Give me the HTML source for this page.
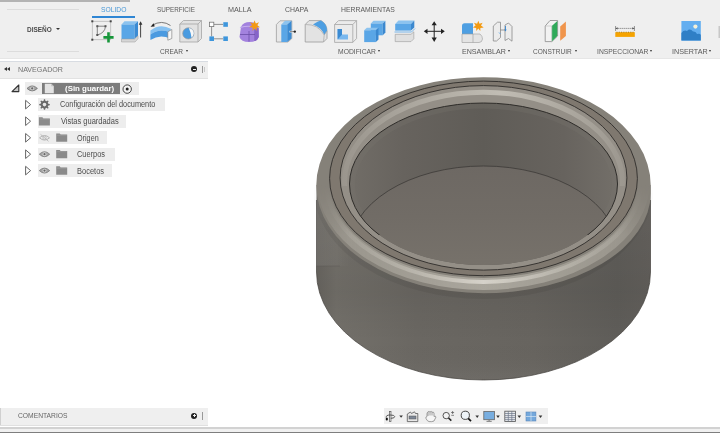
<!DOCTYPE html>
<html><head><meta charset="utf-8"><style>
html,body{margin:0;padding:0;}
body{width:720px;height:433px;position:relative;overflow:hidden;background:#fff;font-family:"Liberation Sans",sans-serif;}
.t{position:absolute;white-space:nowrap;transform-origin:0 0;}
svg{position:absolute;left:0;top:0;}
</style></head><body>
<div style="position:absolute;left:0;top:0;width:720px;height:58.5px;background:#efefef"></div><div style="position:absolute;left:0;top:0;width:130px;height:1.8px;background:#b3b3b3"></div><div style="position:absolute;left:0;top:58px;width:720px;height:1px;background:#e6e6e6"></div><div style="position:absolute;left:7px;top:9px;width:72px;height:41px;border-top:1px solid #dcdcdc;border-bottom:1px solid #dcdcdc"></div><span class="t" style="left:26.70px;top:25.55px;font-size:7.849px;line-height:7.849px;color:#4a4a4a;font-weight:bold;transform:scaleX(0.8241);">DISEÑO</span><div style="position:absolute;left:56px;top:28px;width:0;height:0;border-left:2px solid transparent;border-right:2px solid transparent;border-top:2.5px solid #333"></div><span class="t" style="left:100.50px;top:5.85px;font-size:7.849px;line-height:7.849px;color:#4a98d6;transform:scaleX(0.8597);">SOLIDO</span><div style="position:absolute;left:92px;top:16px;width:43px;height:2px;background:#2f86d4"></div><span class="t" style="left:157.00px;top:5.85px;font-size:7.849px;line-height:7.849px;color:#5a5a5a;transform:scaleX(0.8068);">SUPERFICIE</span><span class="t" style="left:228.00px;top:5.85px;font-size:7.849px;line-height:7.849px;color:#5a5a5a;transform:scaleX(0.9209);">MALLA</span><span class="t" style="left:284.70px;top:5.85px;font-size:7.849px;line-height:7.849px;color:#5a5a5a;transform:scaleX(0.8806);">CHAPA</span><span class="t" style="left:341.00px;top:5.85px;font-size:7.849px;line-height:7.849px;color:#5a5a5a;transform:scaleX(0.8741);">HERRAMIENTAS</span><span class="t" style="left:160.00px;top:47.68px;font-size:7.703px;line-height:7.703px;color:#5a5a5a;transform:scaleX(0.8528);">CREAR</span><div style="position:absolute;left:186.1px;top:49.8px;width:0;height:0;border-left:1.6px solid transparent;border-right:1.6px solid transparent;border-top:2.6px solid #333"></div><span class="t" style="left:338.00px;top:47.68px;font-size:7.703px;line-height:7.703px;color:#5a5a5a;transform:scaleX(0.8791);">MODIFICAR</span><div style="position:absolute;left:378.1px;top:49.8px;width:0;height:0;border-left:1.6px solid transparent;border-right:1.6px solid transparent;border-top:2.6px solid #333"></div><span class="t" style="left:461.70px;top:47.68px;font-size:7.703px;line-height:7.703px;color:#5a5a5a;transform:scaleX(0.9238);">ENSAMBLAR</span><div style="position:absolute;left:508.1px;top:49.8px;width:0;height:0;border-left:1.6px solid transparent;border-right:1.6px solid transparent;border-top:2.6px solid #333"></div><span class="t" style="left:532.60px;top:47.68px;font-size:7.703px;line-height:7.703px;color:#5a5a5a;transform:scaleX(0.8495);">CONSTRUIR</span><div style="position:absolute;left:574.8000000000001px;top:49.8px;width:0;height:0;border-left:1.6px solid transparent;border-right:1.6px solid transparent;border-top:2.6px solid #333"></div><span class="t" style="left:597.00px;top:47.68px;font-size:7.703px;line-height:7.703px;color:#5a5a5a;transform:scaleX(0.8783);">INSPECCIONAR</span><div style="position:absolute;left:650.1px;top:49.8px;width:0;height:0;border-left:1.6px solid transparent;border-right:1.6px solid transparent;border-top:2.6px solid #333"></div><span class="t" style="left:671.80px;top:47.68px;font-size:7.703px;line-height:7.703px;color:#5a5a5a;transform:scaleX(0.9336);">INSERTAR</span><div style="position:absolute;left:709.1px;top:49.8px;width:0;height:0;border-left:1.6px solid transparent;border-right:1.6px solid transparent;border-top:2.6px solid #333"></div><svg width="720" height="60" viewBox="0 0 720 60"><g><rect x="92.3" y="21.3" width="18.4" height="18.4" fill="none" stroke="#b9b9b9" stroke-width="0.8"/><rect x="91.3" y="20.3" width="2" height="2" fill="#444"/><rect x="109.7" y="20.3" width="2" height="2" fill="#444"/><rect x="91.3" y="38.7" width="2" height="2" fill="#444"/><path d="M97.3,26.2 H105.5 M97.3,26.2 V35 M105.5,26.2 Q105,33 97.3,35" fill="none" stroke="#555" stroke-width="0.7"/><rect x="96.3" y="25.2" width="2" height="2" fill="#555"/><rect x="104.5" y="25.2" width="2" height="2" fill="#555"/><rect x="96.3" y="34" width="2" height="2" fill="#555"/><path d="M107.2,32.3 h2.6 v3.8 h3.8 v2.6 h-3.8 v3.8 h-2.6 v-3.8 h-3.8 v-2.6 h3.8 z" fill="#17963a"/></g><path d="M121.5,24.5 L124.5,21.3 L138,21.3 L134.5,24.5 Z" fill="#8cc3ef"/><rect x="121.5" y="24.5" width="13" height="14.5" fill="#5aa6e6"/><path d="M134.5,24.5 L138,21.3 L138,35.8 L134.5,39 Z" fill="#3b8bd3"/><path d="M121.5,39 L134.5,39 L138,35.8 L138,38.8 L135,42 L121.5,42 Z" fill="#d6d6d6" stroke="#9a9a9a" stroke-width="0.5"/><path d="M140.6,23.5 V37.5" stroke="#333" stroke-width="0.9"/><path d="M138.8,24.8 L140.6,21.3 L142.4,24.8 Z" fill="#333"/><path d="M152,25.3 Q162,19.5 170.5,25.5" fill="none" stroke="#6a6a6a" stroke-width="0.9"/><path d="M150.5,26.8 L153.8,23.2 L154.6,26.6 Z" fill="#222"/><path d="M150.4,30.5 Q160,23 170.8,28.8 L170.5,32.5 Q160,27.5 150.4,34.5 Z" fill="#86c1f1"/><path d="M150.4,34.5 Q160,27.5 170.5,32.5 L170.5,38.8 Q160,33.5 150.4,40 Z" fill="#4a9ae0"/><path d="M167.8,31.8 L171.8,29.5 L171.8,38.5 L167.8,40.2 Z" fill="#f6f6f6" stroke="#777" stroke-width="0.6"/><path d="M179.8,24 L183.5,20.5 L201.5,20.5 L201.5,38.5 L198,42 L179.8,42 Z" fill="#e2e2e2" stroke="#a5a5a5" stroke-width="0.8"/><path d="M179.8,24 L198,24 L201.5,20.5 M198,24 L198,42" fill="none" stroke="#a5a5a5" stroke-width="0.8"/><circle cx="188.3" cy="33.4" r="5.6" fill="#4a9be0" stroke="#9a9a9a" stroke-width="0.7"/><path d="M188.8,27.9 Q193.6,28.8 193.8,33.6 Q193.2,36.5 191.5,37.8 Q190.8,32 188.8,27.9 Z" fill="#f7f7f7"/><rect x="209.4" y="22.2" width="4.4" height="4.4" fill="#fff" stroke="#777" stroke-width="0.8"/><path d="M214,24.4 H223 M211.6,26.8 V36.4 M214,38.8 H223" stroke="#777" stroke-width="0.8"/><rect x="223.3" y="22.2" width="4.6" height="4.6" fill="#3e96dc"/><rect x="209.4" y="36.4" width="4.6" height="4.6" fill="#3e96dc"/><rect x="223.3" y="36.4" width="4.6" height="4.6" fill="#3e96dc"/><path d="M241,27 Q243,22 250,22 Q257,22 258.5,28 L258.8,37 Q257,42 249,42 Q241,42 239.5,37 Z" fill="#a382de"/><path d="M240,27.5 Q249,25 256,27.5" fill="none" stroke="#c6b0ef" stroke-width="1.2"/><path d="M249,31 V41.5 M240,34.5 H255 M255,29 V41" fill="none" stroke="#6c4fa8" stroke-width="0.8"/><path d="M255,29 L258.6,28 L258.8,37 Q257.5,40.5 255,41 Z" fill="#8664c8"/><path d="M254.6,20.2 L255.8,23.4 L259,22.3 L257.3,25.2 L260,27.2 L256.6,27.6 L256.5,31 L254.6,28.3 L252.6,31 L252.6,27.6 L249.2,27.2 L252,25.2 L250.2,22.3 L253.4,23.4 Z" fill="#f39a12"/><path d="M276.4,24.5 L280,20.8 L291.8,20.8 L291.8,38.5 L288,42 L276.4,42 Z" fill="#e8e8e8" stroke="#a0a0a0" stroke-width="0.8"/><path d="M281.3,24.5 L285,20.8 L291.5,20.8 L287.2,24.5 Z" fill="#8cc3ef"/><rect x="281.3" y="24.5" width="5.9" height="17.5" fill="#5aa6e6"/><path d="M287.2,24.5 L291.5,20.8 L291.5,38.4 L287.2,42 Z" fill="#3b8bd3"/><path d="M289.5,31.6 H294.5" stroke="#fff" stroke-width="1.6"/><path d="M290,31.6 H295" stroke="#555" stroke-width="0.7"/><circle cx="294.8" cy="31.6" r="1.2" fill="#222"/><path d="M305.2,24.5 L309,20.6 L321,20.6 Q327,24 327,31 L327,38.5 L323.5,42 L305.2,42 Z" fill="#e3e3e3" stroke="#9a9a9a" stroke-width="0.8"/><path d="M313,24.6 Q318,21 321,20.6 Q327,24 327,31 L324.2,35 Q322,28 313,24.6 Z" fill="#4e9fe2"/><path d="M305.2,24.5 Q318,24 324.2,35 L323.5,42 M324.2,35 L327,31" fill="none" stroke="#a8a8a8" stroke-width="0.7"/><path d="M334.6,24.5 L338.5,20.6 L356.6,20.6 L356.6,38.5 L352.8,42.4 L334.6,42.4 Z" fill="#ebebeb" stroke="#a5a5a5" stroke-width="0.8"/><path d="M334.6,24.5 L352.8,24.5 L356.6,20.6 M352.8,24.5 V42.4" fill="none" stroke="#a5a5a5" stroke-width="0.8"/><path d="M337.6,29 H342 V34.5 H348 V39.5 H337.6 Z" fill="#7ab8ee"/><path d="M337.6,29 H342 V34.5 L337.6,39.5 Z" fill="#3b8bd3"/><path d="M370.8,23.5 L373.5,20.8 L385.4,20.8 L382.8,23.5 Z" fill="#8cc3ef"/><rect x="370.8" y="23.5" width="12" height="11.8" fill="#5aa6e6"/><path d="M382.8,23.5 L385.4,20.8 L385.4,32.6 L382.8,35.3 Z" fill="#3b88cf"/><path d="M364.2,30.3 L366.8,27.8 L378.5,27.8 L375.9,30.3 Z" fill="#8cc3ef"/><rect x="364.2" y="30.3" width="11.7" height="11.8" fill="#5aa6e6"/><path d="M375.9,30.3 L378.5,27.8 L378.5,39.5 L375.9,42.1 Z" fill="#3b88cf"/><path d="M395.2,24 L398.5,20.4 L414.3,20.4 L411,24 Z" fill="#8cc3ef"/><rect x="395.2" y="24" width="15.8" height="6.6" fill="#5aa6e6"/><path d="M411,24 L414.3,20.4 L414.3,27.5 L411,30.6 Z" fill="#3b88cf"/><path d="M394.5,32 L411.5,32 L415,28.5" fill="none" stroke="#5aa6e6" stroke-width="0.8"/><path d="M395.2,34.3 L411,34.3 L413.8,31.8 L413.8,38.8 L411,41.6 L395.2,41.6 Z" fill="#e0e0e0" stroke="#9a9a9a" stroke-width="0.6"/><path d="M434.2,23.5 V39.3 M426,31.3 H442.5" stroke="#222" stroke-width="1"/><path d="M431.6,25.2 L434.2,21.3 L436.8,25.2 Z M431.6,37.6 L434.2,41.9 L436.8,37.6 Z M427.5,28.7 L423.8,31.3 L427.5,33.9 Z M441,28.7 L444.8,31.3 L441,33.9 Z" fill="#222"/><path d="M462,26 Q462,23.3 464.5,23.3 L473,23.3 L473,34 L462,34 Z" fill="#4e9fe2"/><path d="M462,34 L473,34 L473,42.5 L462,42.5 Z M473,34 L480,34 Q482.5,36 482.5,39 Q482,42.5 479,42.5 L473,42.5" fill="#e4e4e4" stroke="#9a9a9a" stroke-width="0.6"/><path d="M478.3,20.7 L479.5,23.8 L482.6,22.7 L481,25.6 L483.7,27.5 L480.4,27.9 L480.3,31 L478.3,28.5 L476.3,31 L476.2,27.9 L472.9,27.5 L475.6,25.6 L474,22.7 L477.1,23.8 Z" fill="#f39a12"/><path d="M493.3,26 L497.5,22.2 L500.5,22.2 L500.5,37.5 L496.5,41 L493.3,41 Z" fill="#ececec" stroke="#8a8a8a" stroke-width="0.8"/><path d="M505,25 L508.5,23 L512,26.5 L512,41.2 L508.5,38.5 L505,40.5 Z" fill="#ececec" stroke="#8a8a8a" stroke-width="0.8"/><path d="M500.5,30 L505,30" stroke="#777" stroke-width="0.7"/><path d="M505.5,26 V31" stroke="#3b88cf" stroke-width="0.9"/><path d="M504.3,29.5 L505.5,31.5 L506.7,29.5 Z" fill="#3b88cf"/><path d="M499,32.5 L500.5,34" stroke="#5aa6e6" stroke-width="0.9"/><path d="M545.2,26 L550,20.5 L557.6,20.5 L557.6,36 L551.8,41.6 L545.2,41.6 Z" fill="#f2f2f2" stroke="#8a8a8a" stroke-width="0.8"/><path d="M551.8,26 L557.3,21 L557.3,36 L551.8,41.4 Z" fill="#2faa5a"/><path d="M545.2,26 L551.8,26 V41.6" fill="none" stroke="#bbb" stroke-width="0.6"/><path d="M560.2,26.5 L565.9,21.6 L565.9,36 L560.2,40.8 Z" fill="#f0954c"/><path d="M615.6,28.4 H634.4" stroke="#666" stroke-width="0.8" stroke-dasharray="1.2,0.8"/><path d="M615.6,26 V31 M634.4,26 V31" stroke="#777" stroke-width="0.8"/><path d="M617.6,27.2 L615.8,28.4 L617.6,29.6 Z M632.4,27.2 L634.2,28.4 L632.4,29.6 Z" fill="#444"/><rect x="615.3" y="32.2" width="19.5" height="4.7" fill="#f5a300"/><path d="M616.5,32.2 h17" stroke="#9a6a00" stroke-width="0.8" stroke-dasharray="1,1.3"/><rect x="681.4" y="21" width="19.4" height="19.6" fill="#63aef0"/><path d="M681.4,33 Q684,29.5 687,31 Q690,28 693,31.5 Q696,31 697,34 Q700,33 700.8,35 V40.6 H681.4 Z" fill="#2f7fc6"/><circle cx="695.4" cy="26.6" r="2.1" fill="#f4f0d8"/><rect x="718.5" y="26" width="1.5" height="12" fill="#c8c8c8"/></svg><div style="position:absolute;left:0;top:61px;width:208px;height:16px;background:#efefef;border-top:1px solid #d8dce2;border-bottom:1px solid #e2e2e2"></div><div style="position:absolute;left:204px;top:67px;width:1px;height:5px;background:#c8c8c8"></div><div style="position:absolute;left:4px;top:67px;width:0;height:0;border-top:2.5px solid transparent;border-bottom:2.5px solid transparent;border-right:3px solid #333"></div><div style="position:absolute;left:7px;top:67px;width:0;height:0;border-top:2.5px solid transparent;border-bottom:2.5px solid transparent;border-right:3px solid #333"></div><span class="t" style="left:17.50px;top:65.65px;font-size:7.849px;line-height:7.849px;color:#737373;transform:scaleX(0.9098);">NAVEGADOR</span><div style="position:absolute;left:191.3px;top:66.3px;width:6.2px;height:6.2px;border-radius:50%;background:#222"></div><div style="position:absolute;left:192.6px;top:69px;width:3.6px;height:0.9px;background:#eee"></div><div style="position:absolute;left:202px;top:66px;width:1px;height:7px;background:#999"></div><div style="position:absolute;left:25px;top:82px;width:114px;height:13px;background:#ededed"></div><div style="position:absolute;left:42px;top:83px;width:78px;height:10.6px;background:#7d7d7d"></div><span class="t" style="left:65.00px;top:85.23px;font-size:7.994px;line-height:7.994px;color:#fff;font-weight:bold;transform:scaleX(0.9890);">(Sin guardar)</span><div style="position:absolute;left:38px;top:98.0px;width:127.0px;height:13px;background:#ededed"></div><span class="t" style="left:60.00px;top:101.48px;font-size:8.285px;line-height:8.285px;color:#4d4d4d;transform:scaleX(0.8861);">Configuración del documento</span><div style="position:absolute;left:38px;top:114.5px;width:88.4px;height:13px;background:#ededed"></div><span class="t" style="left:60.50px;top:117.98px;font-size:8.285px;line-height:8.285px;color:#4d4d4d;transform:scaleX(0.9050);">Vistas guardadas</span><div style="position:absolute;left:38px;top:131.1px;width:68.5px;height:13px;background:#ededed"></div><span class="t" style="left:76.70px;top:134.58px;font-size:8.285px;line-height:8.285px;color:#4d4d4d;transform:scaleX(0.8728);">Origen</span><div style="position:absolute;left:38px;top:147.7px;width:76.7px;height:13px;background:#ededed"></div><span class="t" style="left:76.70px;top:151.18px;font-size:8.285px;line-height:8.285px;color:#4d4d4d;transform:scaleX(0.8941);">Cuerpos</span><div style="position:absolute;left:38px;top:164.1px;width:74.0px;height:13px;background:#ededed"></div><span class="t" style="left:76.70px;top:167.58px;font-size:8.285px;line-height:8.285px;color:#4d4d4d;transform:scaleX(0.9053);">Bocetos</span><svg width="720" height="180" viewBox="0 0 720 180"><path d="M12,91.6 L18.8,85 L18.8,91.6 Z" fill="#c9c9c9" stroke="#333" stroke-width="1.1" stroke-linejoin="round"/><path d="M27.000000000000004,88.4 Q32.2,83.4 37.400000000000006,88.4 Q32.2,93.4 27.000000000000004,88.4 Z" fill="#a5a5a5" stroke="#6f6f6f" stroke-width="0.8"/><circle cx="32.2" cy="88.4" r="1.9" fill="#d5d5d5"/><circle cx="32.2" cy="88.4" r="1.1" fill="#666"/><path d="M44.8,83.8 H51.3 L53.8,86.3 V93.3 H44.8 Z" fill="#e3e3e3"/><path d="M51.3,83.8 V86.3 H53.8" fill="#bdbdbd"/><circle cx="127.2" cy="89.1" r="4.2" fill="#f4f4f4" stroke="#333" stroke-width="0.9"/><circle cx="127.2" cy="89.1" r="1.5" fill="#222"/><path d="M25.6,100.3 L30.6,104.6 L25.6,108.89999999999999 Z" fill="#fff" stroke="#666" stroke-width="1" stroke-linejoin="round"/><path d="M25.6,116.9 L30.6,121.2 L25.6,125.5 Z" fill="#fff" stroke="#666" stroke-width="1" stroke-linejoin="round"/><path d="M25.6,133.5 L30.6,137.8 L25.6,142.10000000000002 Z" fill="#fff" stroke="#666" stroke-width="1" stroke-linejoin="round"/><path d="M25.6,149.89999999999998 L30.6,154.2 L25.6,158.5 Z" fill="#fff" stroke="#666" stroke-width="1" stroke-linejoin="round"/><path d="M25.6,166.29999999999998 L30.6,170.6 L25.6,174.9 Z" fill="#fff" stroke="#666" stroke-width="1" stroke-linejoin="round"/><path d="M43.87,99.34 L45.13,99.34 L45.28,100.78 L46.65,101.35 L47.77,100.43 L48.67,101.33 L47.75,102.45 L48.32,103.82 L49.76,103.97 L49.76,105.23 L48.32,105.38 L47.75,106.75 L48.67,107.87 L47.77,108.77 L46.65,107.85 L45.28,108.42 L45.13,109.86 L43.87,109.86 L43.72,108.42 L42.35,107.85 L41.23,108.77 L40.33,107.87 L41.25,106.75 L40.68,105.38 L39.24,105.23 L39.24,103.97 L40.68,103.82 L41.25,102.45 L40.33,101.33 L41.23,100.43 L42.35,101.35 L43.72,100.78 Z" fill="#6a6a6a"/><circle cx="44.5" cy="104.6" r="1.8" fill="#e8e8e8"/><path d="M38.9,117.2 H42.4 L43.4,118.4 H49.9 V125.60000000000001 H38.9 Z" fill="#8a8a8a"/><path d="M39.4,119.0 H49.4" stroke="#a5a5a5" stroke-width="0.6"/><path d="M39.5,137.8 Q44.5,133.20000000000002 49.5,137.8 Q44.5,142.4 39.5,137.8 Z" fill="none" stroke="#b5b5b5" stroke-width="1"/><circle cx="44.5" cy="137.8" r="1.7" fill="none" stroke="#b5b5b5" stroke-width="0.8"/><path d="M40.5,134.3 L48.5,141.3" stroke="#b5b5b5" stroke-width="0.9"/><path d="M56.2,133.4 H59.7 L60.7,134.6 H67.2 V141.8 H56.2 Z" fill="#8a8a8a"/><path d="M56.7,135.20000000000002 H66.7" stroke="#a5a5a5" stroke-width="0.6"/><path d="M39.3,154.2 Q44.5,149.2 49.7,154.2 Q44.5,159.2 39.3,154.2 Z" fill="#a5a5a5" stroke="#7a7a7a" stroke-width="0.8"/><circle cx="44.5" cy="154.2" r="1.9" fill="#d5d5d5"/><circle cx="44.5" cy="154.2" r="1.1" fill="#666"/><path d="M56.2,149.9 H59.7 L60.7,151.1 H67.2 V158.3 H56.2 Z" fill="#8a8a8a"/><path d="M56.7,151.70000000000002 H66.7" stroke="#a5a5a5" stroke-width="0.6"/><path d="M39.3,170.6 Q44.5,165.6 49.7,170.6 Q44.5,175.6 39.3,170.6 Z" fill="#a5a5a5" stroke="#7a7a7a" stroke-width="0.8"/><circle cx="44.5" cy="170.6" r="1.9" fill="#d5d5d5"/><circle cx="44.5" cy="170.6" r="1.1" fill="#666"/><path d="M56.2,166.3 H59.7 L60.7,167.5 H67.2 V174.70000000000002 H56.2 Z" fill="#8a8a8a"/><path d="M56.7,168.10000000000002 H66.7" stroke="#a5a5a5" stroke-width="0.6"/></svg><svg width="720" height="433" viewBox="0 0 720 433"><defs><linearGradient id="body" x1="316" x2="651" y1="0" y2="0" gradientUnits="userSpaceOnUse"><stop offset="0" stop-color="#686560"/><stop offset="0.06" stop-color="#73706a"/><stop offset="0.3" stop-color="#6a6762"/><stop offset="0.65" stop-color="#67645f"/><stop offset="0.9" stop-color="#5f5d59"/><stop offset="1" stop-color="#63605c"/></linearGradient><linearGradient id="bodyv" x1="0" x2="0" y1="185" y2="380" gradientUnits="userSpaceOnUse"><stop offset="0" stop-color="#000" stop-opacity="0"/><stop offset="0.55" stop-color="#000" stop-opacity="0.06"/><stop offset="0.8" stop-color="#000" stop-opacity="0"/><stop offset="1" stop-color="#fff" stop-opacity="0.04"/></linearGradient><linearGradient id="wall" x1="350" x2="617" y1="0" y2="0" gradientUnits="userSpaceOnUse"><stop offset="0" stop-color="#716d67"/><stop offset="0.2" stop-color="#67635e"/><stop offset="0.5" stop-color="#5f5c57"/><stop offset="0.8" stop-color="#67635e"/><stop offset="1" stop-color="#736f69"/></linearGradient><linearGradient id="floor" x1="0" x2="0" y1="163" y2="270" gradientUnits="userSpaceOnUse"><stop offset="0" stop-color="#6d6863"/><stop offset="0.5" stop-color="#716c66"/><stop offset="1" stop-color="#77726b"/></linearGradient><linearGradient id="rimh" x1="316" x2="651" y1="0" y2="0" gradientUnits="userSpaceOnUse"><stop offset="0" stop-color="#c9c5bc" stop-opacity="0"/><stop offset="0.3" stop-color="#c9c5bc" stop-opacity="0.6"/><stop offset="0.5" stop-color="#d8d4cc" stop-opacity="0.95"/><stop offset="0.75" stop-color="#c9c5bc" stop-opacity="0.5"/><stop offset="1" stop-color="#c9c5bc" stop-opacity="0"/></linearGradient><linearGradient id="rimb" x1="316" x2="651" y1="0" y2="0" gradientUnits="userSpaceOnUse"><stop offset="0" stop-color="#bdb9b0" stop-opacity="0"/><stop offset="0.3" stop-color="#bdb9b0" stop-opacity="0.6"/><stop offset="0.55" stop-color="#c6c2b9" stop-opacity="0.9"/><stop offset="0.8" stop-color="#bdb9b0" stop-opacity="0.5"/><stop offset="1" stop-color="#bdb9b0" stop-opacity="0"/></linearGradient><linearGradient id="rimf" x1="316" x2="651" y1="0" y2="0" gradientUnits="userSpaceOnUse"><stop offset="0" stop-color="#a29e95" stop-opacity="0.3"/><stop offset="0.1" stop-color="#a29e95" stop-opacity="0.75"/><stop offset="0.5" stop-color="#aaa69d" stop-opacity="1"/><stop offset="0.9" stop-color="#a29e95" stop-opacity="0.75"/><stop offset="1" stop-color="#a29e95" stop-opacity="0.3"/></linearGradient><clipPath id="innerc"><ellipse cx="483.5" cy="187.2" rx="134.5" ry="83.8" /></clipPath><linearGradient id="fmg" x1="0" x2="0" y1="185" y2="235" gradientUnits="userSpaceOnUse"><stop offset="0" stop-color="#fff" stop-opacity="0"/><stop offset="1" stop-color="#fff" stop-opacity="1"/></linearGradient><mask id="front" maskUnits="userSpaceOnUse" x="300" y="60" width="400" height="300"><rect x="300" y="185" width="400" height="125" fill="url(#fmg)"/></mask><clipPath id="back"><rect x="300" y="60" width="400" height="126"/></clipPath></defs><path d="M316.5,185 L316.5,272 A167,108 0 0 0 650.5,272 L650.5,185 Z" fill="url(#body)"/><path d="M316.5,185 L316.5,272 A167,108 0 0 0 650.5,272 L650.5,185 Z" fill="url(#bodyv)"/><path d="M316.5,200 L316.5,272 A167,108 0 0 0 650.5,272 L650.5,200" fill="none" stroke="#45433f" stroke-width="0.9" opacity="0.8"/><linearGradient id="lstrip" x1="316" x2="350" y1="0" y2="0" gradientUnits="userSpaceOnUse"><stop offset="0" stop-color="#fff" stop-opacity="0.07"/><stop offset="1" stop-color="#fff" stop-opacity="0"/></linearGradient><rect x="316.3" y="185" width="40" height="81" fill="url(#lstrip)"/><path d="M316.3,266 L340,266" stroke="#55524e" stroke-width="0.6" opacity="0.6"/><g mask="url(#front)"><ellipse cx="483.5" cy="188" rx="167" ry="108" fill="none" stroke="#000" stroke-width="6" opacity="0.06"/></g><path d="M316.3,185.2 A167.2,108 0 0 1 650.7,185.2 L650.7,193 A167.2,100 0 0 1 483.5,293.2 A167.2,108 0 0 1 316.3,185.2 Z" fill="#858179"/><g mask="url(#front)"><ellipse cx="483.5" cy="181.5" rx="160.5" ry="102.5" fill="none" stroke="url(#rimf)" stroke-width="12"/><ellipse cx="483.5" cy="180.5" rx="158" ry="101.5" fill="none" stroke="url(#rimh)" stroke-width="4"/></g><ellipse cx="483.5" cy="178.4" rx="153.9" ry="97.3" fill="#7f786f" stroke="#2f2d2a" stroke-width="0.9"/><ellipse cx="483.5" cy="177.85" rx="143.4" ry="92.25" fill="#948f87" stroke="#2f2d2a" stroke-width="0.9"/><g clip-path="url(#back)"><ellipse cx="483.5" cy="181.5" rx="139" ry="89.3" fill="none" stroke="url(#rimb)" stroke-width="5"/></g><clipPath id="innerc2"><ellipse cx="483.5" cy="184" rx="134" ry="81" /></clipPath><ellipse cx="483.5" cy="184" rx="134" ry="81" fill="url(#wall)"/><g clip-path="url(#innerc2)"><ellipse cx="483.5" cy="185" rx="131" ry="79" fill="none" stroke="#77736c" stroke-width="5" opacity="0.3"/><ellipse cx="483.5" cy="250.5" rx="134.5" ry="84.5" fill="url(#floor)" stroke="#3c3a37" stroke-width="0.8"/></g><g clip-path="url(#back2)"><ellipse cx="483.5" cy="184" rx="134" ry="81" fill="none" stroke="#2f2d2a" stroke-width="1"/></g><clipPath id="back2"><rect x="300" y="60" width="400" height="175"/></clipPath></svg><div style="position:absolute;left:0;top:408px;width:208px;height:16.5px;background:#efefef;border-bottom:1px solid #e0e0e0"></div><div style="position:absolute;left:0;top:408px;width:1px;height:16.5px;background:#d0d0d0"></div><span class="t" style="left:17.60px;top:412.05px;font-size:7.849px;line-height:7.849px;color:#666;transform:scaleX(0.8573);">COMENTARIOS</span><div style="position:absolute;left:191px;top:412.6px;width:6.4px;height:6.4px;border-radius:50%;background:#222"></div><div style="position:absolute;left:192.5px;top:415.35px;width:3.4px;height:0.9px;background:#eee"></div><div style="position:absolute;left:193.75px;top:414.1px;width:0.9px;height:3.4px;background:#eee"></div><div style="position:absolute;left:202px;top:412px;width:1px;height:7.5px;background:#999"></div><div style="position:absolute;left:0;top:427px;width:720px;height:2px;background:#d2d2d2"></div><div style="position:absolute;left:0;top:429px;width:720px;height:2.5px;background:#f0f0f0"></div><div style="position:absolute;left:0;top:431.5px;width:720px;height:1.5px;background:#7e7e7e"></div><div style="position:absolute;left:383.5px;top:408.4px;width:164.5px;height:15.8px;background:#efefef"></div><svg width="720" height="433" viewBox="0 0 720 433"><path d="M390.2,411 V421.7" stroke="#444" stroke-width="2.2"/><path d="M390.2,411.6 V421.1" stroke="#fafafa" stroke-width="0.9"/><path d="M386,417.5 Q386,415 390.2,415 Q394.7,415 394.7,416.6 Q394.7,418.3 390.8,418.3" fill="none" stroke="#444" stroke-width="0.9"/><ellipse cx="386.8" cy="418.9" rx="1.1" ry="1.5" fill="#111"/><path d="M399.3,415.4 L402.90000000000003,415.4 L401.1,417.79999999999995 Z" fill="#333"/><path d="M407.3,414 L410.5,412 L411.5,413.5 L414.5,411.8 L415.5,413.5 L417.8,413.5 V421.6 H407.3 Z" fill="#e8e8e8" stroke="#555" stroke-width="0.8"/><rect x="409" y="416" width="7" height="3" fill="#7d8796" stroke="#555" stroke-width="0.5"/><path d="M427,416.5 V413.5 Q427,412.3 428,412.5 V416 M428,412.5 V411.8 Q429.2,411 430,412 V415.5 M430,412 Q431.2,410.8 432,412 V415.5 M432,412.3 Q433.5,411.5 434,413 V416.5 Q435.5,415.5 436,417 L434,421 Q432,422 429,421.6 Q427,421 426,418.5 Q425.3,416.8 427,416.5" fill="#f6f6f6" stroke="#888" stroke-width="0.8"/><circle cx="446.2" cy="415.6" r="3.2" fill="#f4f4f4" stroke="#444" stroke-width="0.9"/><path d="M448.5,418 L451.3,420.6" stroke="#222" stroke-width="1.6"/><path d="M452.6,411 V414 M451.1,412.5 H454.1 M451.3,415.3 H454" stroke="#555" stroke-width="0.7"/><circle cx="465.3" cy="415.3" r="4.1" fill="#eef4f8" stroke="#333" stroke-width="0.9"/><path d="M468.2,418.4 L471,421.2" stroke="#111" stroke-width="1.7"/><path d="M475.4,415.6 L479.0,415.6 L477.2,418.0 Z" fill="#333"/><rect x="483.8" y="411.5" width="10.6" height="8.2" fill="#78aee0" stroke="#666" stroke-width="0.8"/><path d="M486.5,421.3 H491.7" stroke="#777" stroke-width="1"/><path d="M489.1,419.7 V421" stroke="#777" stroke-width="1"/><path d="M496.2,415.6 L499.8,415.6 L498.0,418.0 Z" fill="#333"/><rect x="504.8" y="411.2" width="10.8" height="10.3" fill="#e8eaee" stroke="#555" stroke-width="0.8"/><path d="M505,413.5 H515.5 M505,415.6 H515.5 M505,417.6 H515.5 M505,419.6 H515.5 M508.3,411.2 V421.5 M511.8,411.2 V421.5" stroke="#6a7688" stroke-width="0.7"/><path d="M517.5,415.6 L521.1,415.6 L519.3,418.0 Z" fill="#333"/><rect x="526" y="412" width="9.9" height="9" fill="#74a8dc" stroke="#5a86b8" stroke-width="0.6"/><path d="M526,416.5 H536 M531,412 V421" stroke="#d8e6f4" stroke-width="0.7"/><path d="M538.7,415.6 L542.3000000000001,415.6 L540.5,418.0 Z" fill="#333"/></svg>
</body></html>
